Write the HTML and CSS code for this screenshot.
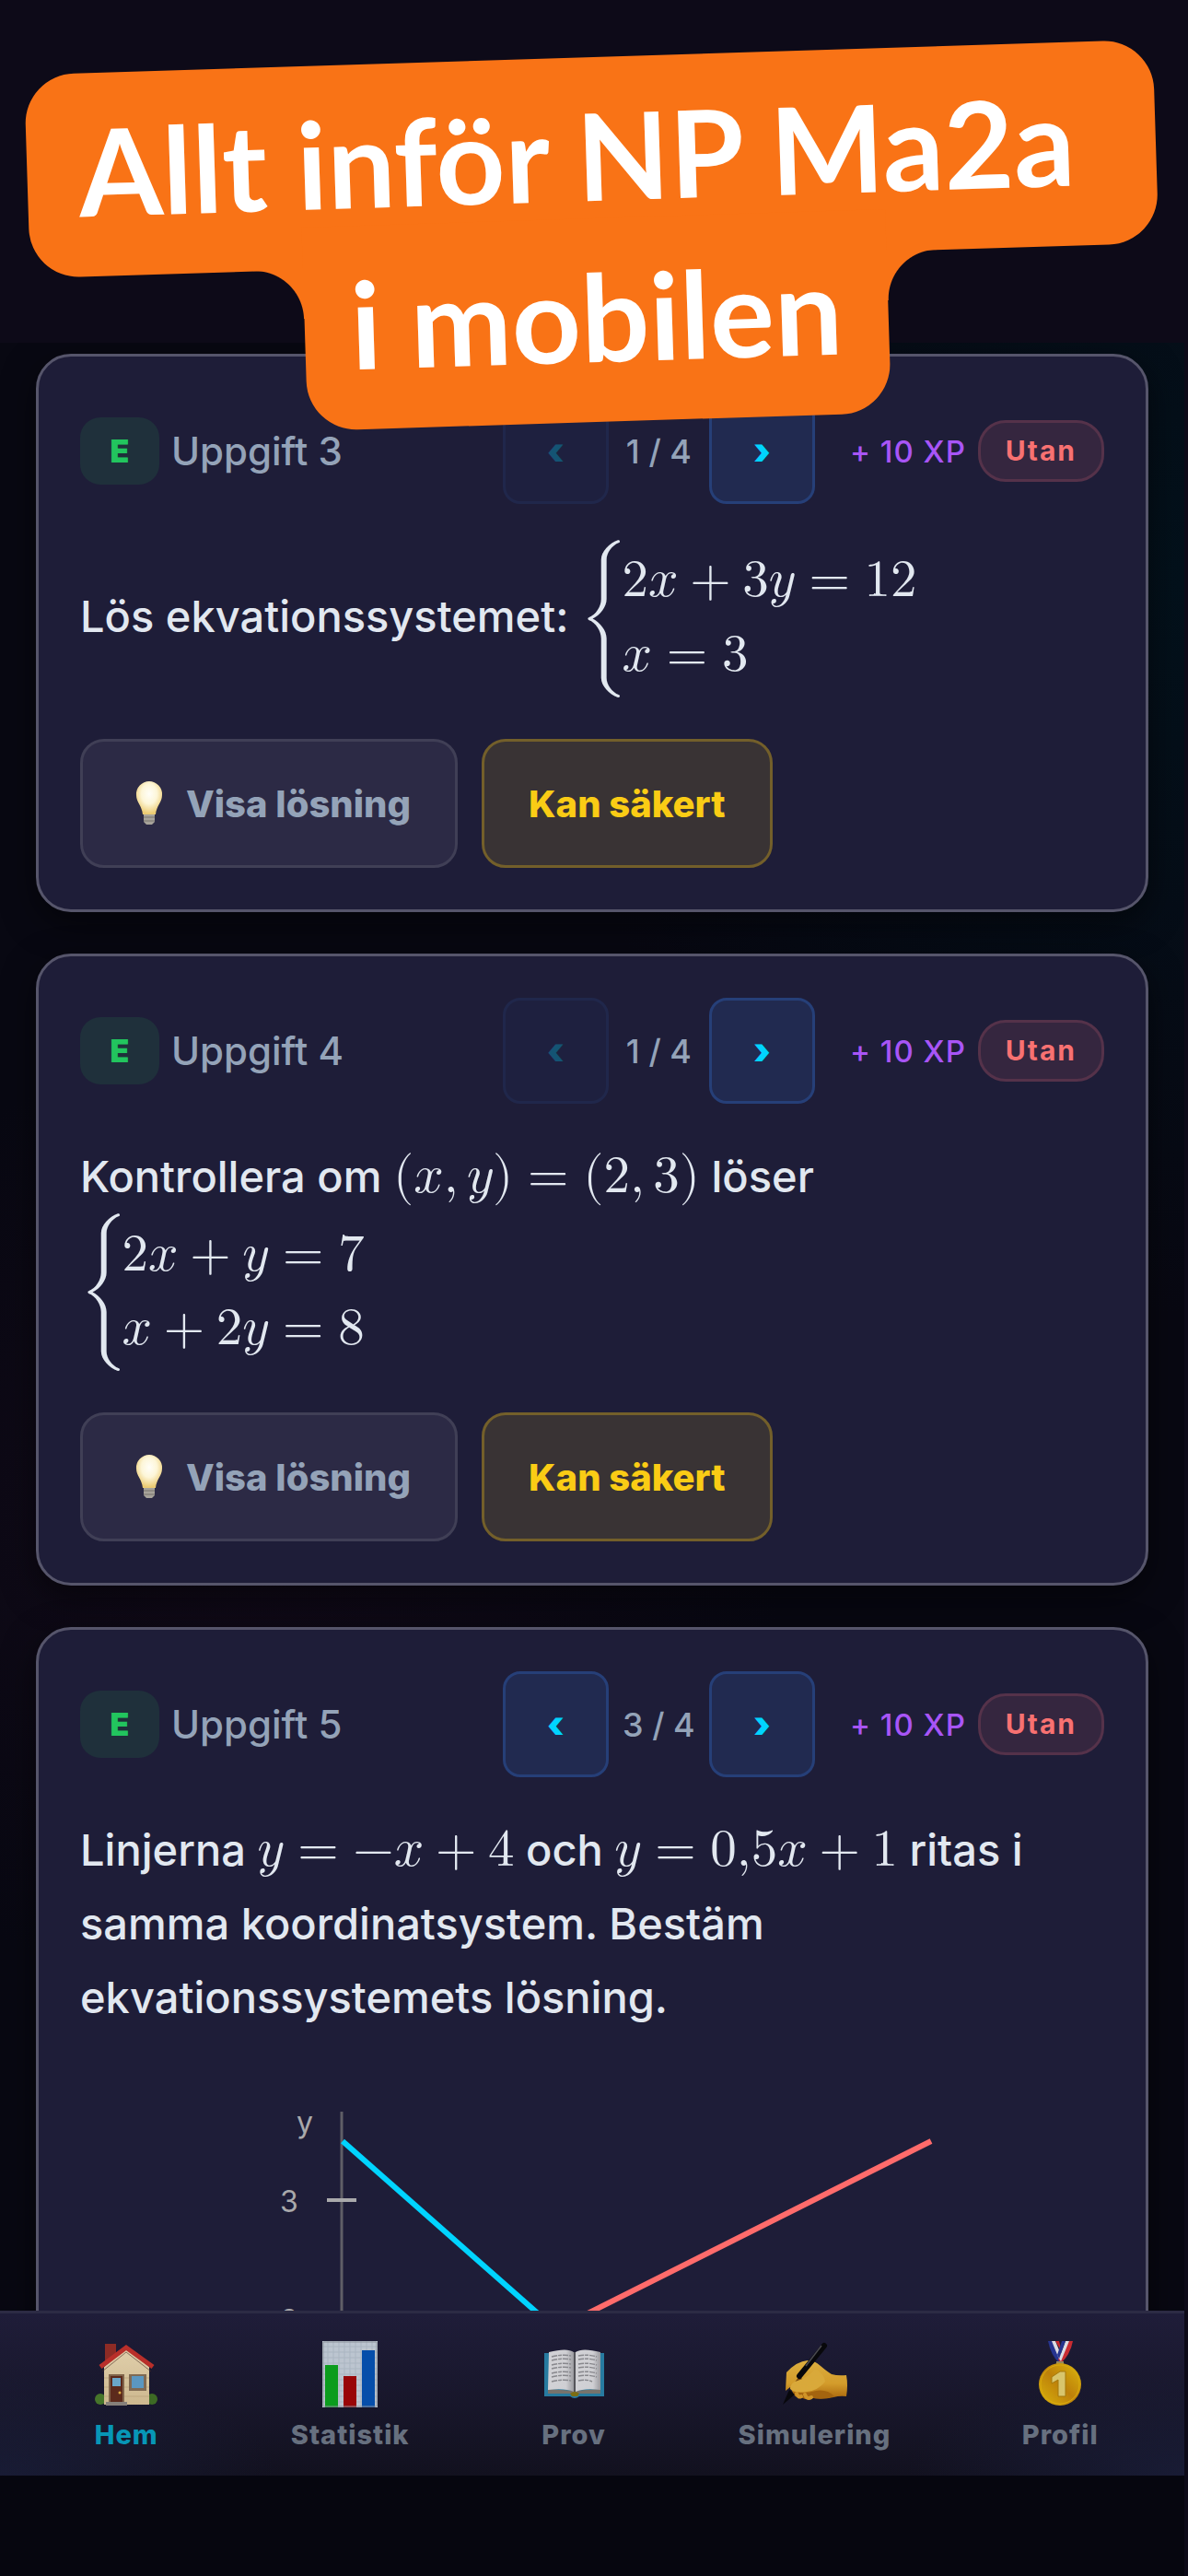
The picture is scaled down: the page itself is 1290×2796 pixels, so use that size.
FILE: index.html
```html
<!DOCTYPE html>
<html lang="sv">
<head>
<meta charset="utf-8">
<meta name="viewport" content="width=device-width, initial-scale=1">
<title>NP Ma2a</title>
<link rel="stylesheet" href="styles.css">
</head>
<body>
<svg class="defs" aria-hidden="true">
  <defs>
    <radialGradient id="glass" cx="50%" cy="38%" r="60%"><stop offset="0" stop-color="#fffef8"/><stop offset=".5" stop-color="#fdf6d8"/><stop offset="1" stop-color="#eccb72"/></radialGradient>
    <linearGradient id="gold" x1="0" y1="1" x2="1" y2="0"><stop offset="0" stop-color="#d9b40c"/><stop offset=".5" stop-color="#bd800a"/><stop offset="1" stop-color="#dcb80e"/></linearGradient>
    <linearGradient id="skin" x1="0" y1="0" x2="0" y2="1"><stop offset="0" stop-color="#dcae3f"/><stop offset=".6" stop-color="#d39c2b"/><stop offset="1" stop-color="#a9660c"/></linearGradient>
    <linearGradient id="wall" x1="0" y1="0" x2="0" y2="1"><stop offset="0" stop-color="#e0cfab"/><stop offset="1" stop-color="#cdb88f"/></linearGradient>
    <linearGradient id="page" x1="0" y1="0" x2="1" y2="0"><stop offset="0" stop-color="#d2d2d6"/><stop offset=".7" stop-color="#cfcfd3"/><stop offset="1" stop-color="#9b9ba0"/></linearGradient>
    <symbol id="bulb" viewBox="0 0 48 48">
      <path d="M24 0a14 14 0 0 1 14 15c0 8-6 11-7 21H17C16 26 10 23 10 15A14 14 0 0 1 24 0z" fill="url(#glass)"/>
      <path d="M18 36h12v8l-3 3h-6l-3-3z" fill="#a7a39a"/>
      <path d="M18 39h12M18 43h12" stroke="#77736c" stroke-width="1"/>
    </symbol>
  </defs>
</svg>

<h1 class="banner">
  <span class="banner-line">Allt inför NP Ma2a&nbsp;</span>
  <span class="banner-line banner-tail">i mobilen</span>
</h1>

<div class="app">
  <main class="feed">
    <article class="card">
      <header class="card-head">
        <span class="level">E</span>
        <span class="name">Uppgift 3</span>
        <div class="pager">
          <button class="step" disabled aria-label="Föregående">‹</button>
          <span class="count">1 / 4</span>
          <button class="step" aria-label="Nästa">›</button>
        </div>
        <span class="xp">+ 10 XP</span>
        <span class="tool">Utan</span>
      </header>
      <p class="question">Lös ekvationssystemet: <math><mrow><mo stretchy="true">{</mo><mtable><mtr><mtd><mn>2</mn><mi>x</mi><mo>+</mo><mn>3</mn><mi>y</mi><mo>=</mo><mn>12</mn></mtd></mtr><mtr><mtd><mi>x</mi><mo>=</mo><mn>3</mn></mtd></mtr></mtable></mrow></math></p>
      <div class="actions">
        <button class="btn"><svg class="bulb" aria-hidden="true"><use href="#bulb"/></svg>Visa lösning</button>
        <button class="btn btn-sure">Kan säkert</button>
      </div>
    </article>

    <article class="card">
      <header class="card-head">
        <span class="level">E</span>
        <span class="name">Uppgift 4</span>
        <div class="pager">
          <button class="step" disabled aria-label="Föregående">‹</button>
          <span class="count">1 / 4</span>
          <button class="step" aria-label="Nästa">›</button>
        </div>
        <span class="xp">+ 10 XP</span>
        <span class="tool">Utan</span>
      </header>
      <p class="question">Kontrollera om <math><mo stretchy="false">(</mo><mi>x</mi><mo separator="true">,</mo><mi>y</mi><mo stretchy="false">)</mo><mo>=</mo><mo stretchy="false">(</mo><mn>2</mn><mo separator="true">,</mo><mn>3</mn><mo stretchy="false">)</mo></math> löser<br><math><mrow><mo stretchy="true">{</mo><mtable><mtr><mtd><mn>2</mn><mi>x</mi><mo>+</mo><mi>y</mi><mo>=</mo><mn>7</mn></mtd></mtr><mtr><mtd><mi>x</mi><mo>+</mo><mn>2</mn><mi>y</mi><mo>=</mo><mn>8</mn></mtd></mtr></mtable></mrow></math></p>
      <div class="actions">
        <button class="btn"><svg class="bulb" aria-hidden="true"><use href="#bulb"/></svg>Visa lösning</button>
        <button class="btn btn-sure">Kan säkert</button>
      </div>
    </article>

    <article class="card">
      <header class="card-head">
        <span class="level">E</span>
        <span class="name">Uppgift 5</span>
        <div class="pager">
          <button class="step" aria-label="Föregående">‹</button>
          <span class="count">3 / 4</span>
          <button class="step" aria-label="Nästa">›</button>
        </div>
        <span class="xp">+ 10 XP</span>
        <span class="tool">Utan</span>
      </header>
      <p class="question">Linjerna <math><mi>y</mi><mo>=</mo><mo form="prefix">−</mo><mi>x</mi><mo>+</mo><mn>4</mn></math> och <math><mi>y</mi><mo>=</mo><mn>0,5</mn><mi>x</mi><mo>+</mo><mn>1</mn></math> ritas i samma koordinatsystem. Bestäm ekvationssystemets lösning.</p>
      <svg class="graph" viewBox="0 7 1112 400" role="img" aria-label="Två räta linjer i ett koordinatsystem">
        <path class="axis" d="M284 46V405"/>
        <path class="tick" d="M268 142h32M268 271h32"/>
        <text x="244" y="69">y</text>
        <text x="227" y="155">3</text>
        <text x="227" y="284">2</text>
        <path class="line-a" d="M285 78L649 399"/>
        <path class="line-b" d="M924 78L284 399"/>
      </svg>
    </article>
  </main>

  <nav class="tabs">
    <a class="tab active" href="#hem">
      <svg viewBox="0 0 72 72" aria-hidden="true">
        <circle cx="8" cy="63" r="6" fill="#46752a"/><circle cx="64" cy="63" r="6" fill="#3d6a24"/>
        <path d="M13 3h12v12L13 24z" fill="#8d2b25"/>
        <path d="M12 28L36 8l25 20v41H12z" fill="url(#wall)"/>
        <path d="M12 40h49M12 50h49M12 60h49" stroke="#bfa980" stroke-width="1"/>
        <path d="M8 28L36 7l29 21" fill="none" stroke="#b92f2a" stroke-width="5"/>
        <path d="M10 33L36 12l27 21" fill="none" stroke="#4c302a" stroke-width="1" opacity=".6"/>
        <path d="M17 36h17v31H17z" fill="#80644b"/><path d="M19 38h13v29H19z" fill="#5c2a1c"/>
        <path d="M21 40h9v9h-9z" fill="#6aa6c8"/><circle cx="29" cy="56" r="1.5" fill="#d9aa42"/>
        <path d="M39 36h19v18H39z" fill="#806a53"/><path d="M42 38h13v13H42z" fill="#5b97c0"/>
        <path d="M14 66h23v4H14z" fill="#86807a"/>
      </svg>
      <span>Hem</span>
    </a>
    <a class="tab" href="#statistik">
      <svg viewBox="0 0 72 72" aria-hidden="true">
        <path d="M6 0h60v72H6z" fill="#bcc5d0"/>
        <path d="M6 6h60M6 12h60M6 18h60M6 24h60M6 30h60M6 36h60M6 42h60M6 48h60M6 54h60M6 60h60M6 66h60M12 0v72M18 0v72M24 0v72M30 0v72M36 0v72M42 0v72M48 0v72M54 0v72M60 0v72" stroke="#aab5c1" stroke-width="1"/>
        <path d="M9 26h14v46H9z" fill="#0b9c1d"/><path d="M29 38h14v34H29z" fill="#990608"/><path d="M49 10h14v62H49z" fill="#064eaa"/>
        <path d="M7 1h58v70H7z" fill="none" stroke="#8b929b" stroke-width="1"/>
      </svg>
      <span>Statistik</span>
    </a>
    <a class="tab" href="#prov">
      <svg viewBox="0 0 72 72" aria-hidden="true">
        <path d="M4 13h65v47H42q-5 4-10 0H4z" fill="#277ba0"/>
        <path d="M8 52l28 2 29-2v5H42q-5 3-10 0H8z" fill="#77736c"/>
        <path d="M9 12q20-5 27 0v43q-9-4-28-2z" fill="url(#page)"/>
        <path d="M65 12q-20-5-27 0v43q9-4 27-2z" fill="url(#page)"/>
        <path d="M37 12v43" stroke="#55555a" stroke-width="2"/>
        <path d="M12 17q12-3 21-1M12 21q12-3 21-1M12 26q12-3 21-1M12 30q12-3 21-1M12 35q12-3 21-1M12 39q12-3 21-1M12 44q12-3 21-1M41 16q11-2 20 1M41 20q11-2 20 1M41 25q11-2 20 1M41 29q11-2 20 1M41 34q11-2 20 1M41 38q11-2 20 1M41 43q9-2 15 1" fill="none" stroke="#88888d" stroke-width="1.4" stroke-dasharray="6 1 4 1"/>
        <path d="M32 57q5-4 10 0l-2 3h-6z" fill="#7b6d14"/>
      </svg>
      <span>Prov</span>
    </a>
    <a class="tab" href="#simulering">
      <svg viewBox="0 0 72 72" aria-hidden="true">
        <path d="M5 54L6 34Q17 22 29 21Q37 21 43 27Q50 33 55 36Q62 38 71 37Q73 48 71 60Q64 59 57 61Q44 64 30 61Q26 65 21 60Q16 63 13 56L10 50Z" fill="url(#skin)"/>
        <path d="M13 55Q25 58 38 54Q50 52 58 60Q44 65 32 61Q26 65 22 60Q16 62 13 55z" fill="#a4640f"/>
        <path d="M17 57q2 5 5 3M26 58q2 6 7 3" fill="none" stroke="#d09428" stroke-width="4" stroke-linecap="round"/>
        <path d="M9 53L2 69l13-11z" fill="#08080c"/>
        <path d="M20 38L14 46L24 42z" fill="#7c480a"/>
        <path d="M47 5L20 38" stroke="#08080b" stroke-width="6" stroke-linecap="round"/>
        <path d="M44 5L27 27" stroke="#4a4a50" stroke-width="1.5"/>
        <path d="M10 52Q10 45 18 43Q29 40 37 30Q47 35 48 44Q40 54 28 55Q15 57 10 52z" fill="#d9a93a"/>
      </svg>
      <span>Simulering</span>
    </a>
    <a class="tab" href="#profil">
      <svg viewBox="0 0 72 72" aria-hidden="true">
        <path d="M23 0h5l10 20-3 4q-9-9-12-24z" fill="#26348f"/><path d="M27 0h4l7 17-2 5z" fill="#dcdce2"/><path d="M31 0h4l3 12z" fill="#c5292f"/>
        <path d="M50 0h-4L34 20l3 4q10-9 13-24z" fill="#c92c32"/><path d="M46 0h-4l-7 19 2 3z" fill="#dcdce2"/><path d="M42 0h-4l-5 15 2 4z" fill="#26348f"/>
        <path d="M32 22h8v4h-8z" fill="#9a8a58"/>
        <circle cx="36" cy="47" r="23" fill="url(#gold)"/><circle cx="36" cy="47" r="21" fill="none" stroke="#d9aa0d" stroke-width="1"/>
        <path d="M36 33h6v27h-8V42l-7 4v-7z" fill="#d8c56d" stroke="#a4780c" stroke-width="1"/>
      </svg>
      <span>Profil</span>
    </a>
  </nav>
</div>
</body>
</html>
```
FILE: styles.css
```css
* { box-sizing: border-box; }

body {
  margin: 0;
  height: 100vh;
  padding-right: 4px;
  overflow: hidden;
  background: #0d0a18;
  color: #e2e8f0;
  font-family: Inter, "Liberation Sans", sans-serif;
}

.defs { position: absolute; width: 0; height: 0; }

/* Tilted headline laid over the app */
.banner {
  position: absolute;
  z-index: 2;
  top: 62px;
  left: 0;
  right: 0;
  margin: 0;
  display: flex;
  flex-direction: column;
  align-items: center;
  transform: rotate(-1.8deg);
  color: #fff;
  font: 700 131px/175px Lato, "Open Sans", sans-serif;
}
.banner-line {
  padding: 18px 56px 28px;
  border-radius: 54px;
  background: #f97316;
  white-space: nowrap;
}
.banner-tail {
  position: relative;
  margin-top: -46px;
  padding: 18px 50px 28px;
  border-radius: 0 0 54px 54px;
}
.banner-tail::before,
.banner-tail::after {
  content: "";
  position: absolute;
  top: 44px;
  width: 55px;
  height: 55px;
}
.banner-tail::before {
  right: calc(100% - 1px);
  background: radial-gradient(circle at 0 100%, transparent 53px, #f97316 54px);
}
.banner-tail::after {
  left: calc(100% - 1px);
  background: radial-gradient(circle at 100% 100%, transparent 53px, #f97316 54px);
}

.app {
  height: 100%;
  display: flex;
  flex-direction: column;
  padding: 372px 0 109px;
  background: linear-gradient(#0d0a18 372px, #06060f 372px);
}

.feed {
  flex: 1;
  min-height: 0;
  overflow: hidden;
  display: flex;
  flex-direction: column;
  gap: 45px;
  padding: 12px 39px 0;
  background:
    radial-gradient(ellipse 700px 800px at 100% 12%, #03111b, transparent),
    radial-gradient(ellipse 600px 500px at 20% 60%, #110a18, transparent),
    #080812;
}

.card {
  flex: none;
  padding: 45px;
  border: 3px solid #56556b;
  border-radius: 38px;
  background: #1e1d38;
  box-shadow: 0 12px 36px rgba(0, 0, 0, .5);
}

.card-head { display: flex; align-items: center; height: 115px; }
.level {
  width: 86px;
  border-radius: 22px;
  background: #1f303b;
  color: #22c55e;
  font-size: 34px;
  font-weight: 900;
  line-height: 73px;
  text-align: center;
}
.name { margin-left: 13px; color: #94a3b8; font-size: 42px; font-weight: 500; }
.pager { display: flex; align-items: center; margin-left: auto; }
.step {
  width: 115px;
  height: 115px;
  padding: 0;
  border: 3px solid #263f78;
  border-radius: 19px;
  background: #212a50;
  color: #00d4ff;
  font: 900 40px Inter, sans-serif;
}
.step:disabled { opacity: .3; }
.count { width: 109px; color: #94a3b8; font-size: 36px; font-weight: 500; text-align: center; }
.xp { margin: 0 13px 0 38px; color: #a855f7; font-size: 33px; font-weight: 500; letter-spacing: 1px; }
.tool {
  padding: 0 27px;
  border: 3px solid #55324a;
  border-radius: 30px;
  background: #35263f;
  color: #f87171;
  font-size: 30px;
  font-weight: 700;
  letter-spacing: 2px;
  line-height: 61px;
}

.question { margin: 39px 0 45px; font-size: 47px; font-weight: 500; line-height: 80px; }

math {
  font: 400 57px/1 "Latin Modern Math", math, "Liberation Serif", serif;
}
mtable { margin-left: -6px; }
mtd { height: 81px; padding: 18px 0 0; text-align: left; }

.actions { display: flex; gap: 26px; }
.btn {
  display: flex;
  align-items: center;
  gap: 16px;
  height: 140px;
  padding: 0 48px;
  border: 3px solid #403f56;
  border-radius: 26px;
  background: #2c2a45;
  color: #94a3b8;
  font: 800 40px Inter, sans-serif;
}
.btn-sure { border-color: #735f2a; background: #393334; color: #facc15; }
.bulb { width: 48px; height: 48px; }

.graph { display: block; width: 100%; font-size: 32px; }
.graph text { fill: #a9a9ab; text-anchor: middle; }
.graph path { fill: none; }
.axis { stroke: #5f5e66; stroke-width: 3; }
.tick { stroke: #a9a9ab; stroke-width: 4; }
.line-a { stroke: #00d4ff; stroke-width: 6; }
.line-b { stroke: #ff6b6b; stroke-width: 6; }

.tabs {
  flex: none;
  display: flex;
  justify-content: space-around;
  padding: 30px 22px 27px 30px;
  border-top: 3px solid #2c2b44;
  background:
    radial-gradient(ellipse 300px 120px at 0 100%, rgba(26, 30, 58, .8), transparent),
    radial-gradient(ellipse 300px 120px at 100% 100%, rgba(26, 30, 58, .8), transparent),
    linear-gradient(#1f1d39, #12111f);
}
.tab {
  display: flex;
  flex-direction: column;
  align-items: center;
  gap: 13px;
  color: #67707f;
  font-size: 29px;
  font-weight: 800;
  letter-spacing: 1px;
  line-height: 34px;
  text-decoration: none;
}
.tab svg { width: 72px; height: 72px; }
.tab.active { color: #0796b6; }
```
